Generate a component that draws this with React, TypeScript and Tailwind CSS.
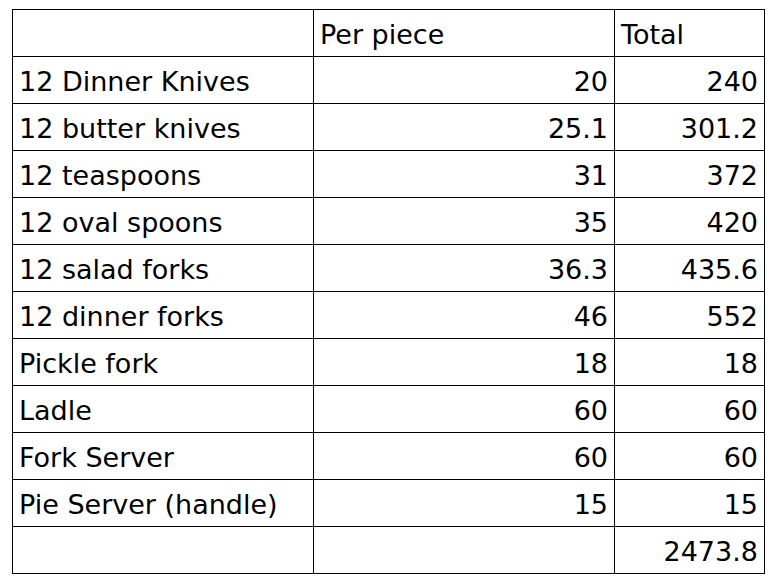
const rows: [string, string, string][] = [
  ['12 Dinner Knives', '20', '240'],
  ['12 butter knives', '25.1', '301.2'],
  ['12 teaspoons', '31', '372'],
  ['12 oval spoons', '35', '420'],
  ['12 salad forks', '36.3', '435.6'],
  ['12 dinner forks', '46', '552'],
  ['Pickle fork', '18', '18'],
  ['Ladle', '60', '60'],
  ['Fork Server', '60', '60'],
  ['Pie Server (handle)', '15', '15'],
  ['', '', '2473.8'],
]

const cell = 'h-[47px] border border-black px-[6px] pb-[8px] align-bottom leading-none'

export default function App() {
  return (
    <div className="min-h-[587px] w-[773px] bg-white pl-[12px] pt-[9px] font-['DejaVu_Sans',sans-serif] text-[27px] text-black">
      <table className="w-[752px] table-fixed border-collapse">
        <colgroup>
          <col className="w-[301px]" />
          <col className="w-[301px]" />
          <col className="w-[150px]" />
        </colgroup>
        <tbody>
          <tr>
            <td className={cell}></td>
            <td className={cell}>Per piece</td>
            <td className={cell}>Total</td>
          </tr>
          {rows.map(([name, piece, total], i) => (
            <tr key={i}>
              <td className={cell}>{name}</td>
              <td className={`${cell} text-right`}>{piece}</td>
              <td className={`${cell} text-right`}>{total}</td>
            </tr>
          ))}
        </tbody>
      </table>
    </div>
  )
}
